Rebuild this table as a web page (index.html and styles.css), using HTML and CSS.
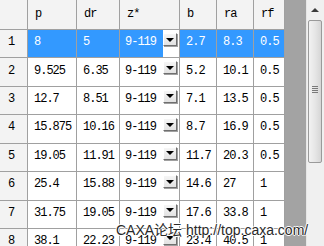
FILE: index.html
```html
<!DOCTYPE html>
<html>
<head>
<meta charset="utf-8">
<link rel="stylesheet" href="styles.css">
</head>
<body>
<div class="window">
  <div class="grid">
    <div class="hcell corner"></div>
    <div class="hcell">p</div>
    <div class="hcell">dr</div>
    <div class="hcell">z*</div>
    <div class="hcell">b</div>
    <div class="hcell">ra</div>
    <div class="hcell">rf</div>

    <div class="rcell">1</div>
    <div class="cell sel">8</div>
    <div class="cell sel">5</div>
    <div class="cell combo"><span class="val sel">9-119</span><span class="drop"><span class="btn"></span></span></div>
    <div class="cell sel">2.7</div>
    <div class="cell sel">8.3</div>
    <div class="cell sel">0.5</div>

    <div class="rcell">2</div>
    <div class="cell">9.525</div>
    <div class="cell">6.35</div>
    <div class="cell combo"><span class="val">9-119</span><span class="drop"><span class="btn"></span></span></div>
    <div class="cell">5.2</div>
    <div class="cell">10.1</div>
    <div class="cell">0.5</div>

    <div class="rcell">3</div>
    <div class="cell">12.7</div>
    <div class="cell">8.51</div>
    <div class="cell combo"><span class="val">9-119</span><span class="drop"><span class="btn"></span></span></div>
    <div class="cell">7.1</div>
    <div class="cell">13.5</div>
    <div class="cell">0.5</div>

    <div class="rcell">4</div>
    <div class="cell">15.875</div>
    <div class="cell">10.16</div>
    <div class="cell combo"><span class="val">9-119</span><span class="drop"><span class="btn"></span></span></div>
    <div class="cell">8.7</div>
    <div class="cell">16.9</div>
    <div class="cell">0.5</div>

    <div class="rcell">5</div>
    <div class="cell">19.05</div>
    <div class="cell">11.91</div>
    <div class="cell combo"><span class="val">9-119</span><span class="drop"><span class="btn"></span></span></div>
    <div class="cell">11.7</div>
    <div class="cell">20.3</div>
    <div class="cell">0.5</div>

    <div class="rcell">6</div>
    <div class="cell">25.4</div>
    <div class="cell">15.88</div>
    <div class="cell combo"><span class="val">9-119</span><span class="drop"><span class="btn"></span></span></div>
    <div class="cell">14.6</div>
    <div class="cell">27</div>
    <div class="cell">1</div>

    <div class="rcell">7</div>
    <div class="cell">31.75</div>
    <div class="cell">19.05</div>
    <div class="cell combo"><span class="val">9-119</span><span class="drop"><span class="btn"></span></span></div>
    <div class="cell">17.6</div>
    <div class="cell">33.8</div>
    <div class="cell">1</div>

    <div class="rcell">8</div>
    <div class="cell">38.1</div>
    <div class="cell">22.23</div>
    <div class="cell combo"><span class="val">9-119</span><span class="drop"><span class="btn"></span></span></div>
    <div class="cell">23.4</div>
    <div class="cell">40.5</div>
    <div class="cell">1</div>
  </div>
  <div class="workspace"></div>
  <div class="vscroll">
    <div class="sb-up"><span class="tri-up"></span></div>
    <div class="sb-thumb"><span class="grip"></span></div>
  </div>
  <div class="watermark">CAXA论坛 http://top.caxa.com/</div>
</div>
</body>
</html>
```
FILE: styles.css
```css
* { box-sizing: border-box; }
html, body { margin: 0; padding: 0; }
body { width: 324px; height: 246px; overflow: hidden; background: #ffffff; }

.window {
  position: relative;
  display: flex;
  width: 324px;
  height: 246px;
  overflow: hidden;
  font-family: "Liberation Mono", "DejaVu Sans Mono", monospace;
  font-size: 12px;
  letter-spacing: -1px;
  color: #000;
}

.grid {
  display: grid;
  grid-template-columns: 28px 49px 43px 60px 37px 37px 31px;
  grid-template-rows: 30px repeat(8, 28.43px);
  flex: 0 0 285px;
  align-content: start;
}

.hcell, .rcell, .cell {
  border-right: 1px solid #a0a0a0;
  border-bottom: 1px solid #a0a0a0;
  display: flex;
  align-items: center;
  padding-left: 7px;
  padding-bottom: 3px;
  white-space: nowrap;
}
.hcell { background: #f3f3f3; padding-bottom: 1px; }
.rcell { background: #f3f3f3; padding-left: 8px; }
.cell { background: #fff; padding-left: 6px; }
.sel { background: #3399ff; color: #fff; }

.cell.combo { padding: 0; align-items: stretch; }
.combo .val {
  flex: 1;
  display: flex;
  align-items: center;
  padding-left: 5px;
  padding-bottom: 3px;
}
.combo .drop {
  flex: 0 0 16px;
  background: #fff;
  padding-top: 3px;
}
.combo .btn {
  display: flex;
  align-items: center;
  justify-content: center;
  width: 14px;
  height: 13px;
  background: linear-gradient(#f6f6f6, #e2e2e2);
  border: 1px solid;
  border-color: #ffffff #6f6f6f #6f6f6f #ffffff;
  box-shadow: 1px 1px 0 #a0a0a0;
}
.combo .btn::after {
  content: "";
  width: 0;
  height: 0;
  border-left: 4px solid transparent;
  border-right: 4px solid transparent;
  border-top: 4px solid #000;
}

.workspace {
  flex: 0 0 21px;
  background: #a3a3a3;
}

.vscroll {
  flex: 0 0 18px;
  background: #f0f0f0;
  border-left: 1px solid #e6e6e6;
  padding-right: 2px;
  display: flex;
  flex-direction: column;
}
.sb-up {
  height: 20px;
  display: flex;
  align-items: center;
  justify-content: center;
}
.tri-up {
  width: 0;
  height: 0;
  border-left: 4px solid transparent;
  border-right: 4px solid transparent;
  border-bottom: 4px solid #3c3c3c;
}
.sb-thumb {
  margin-left: 1px;
  width: 14px;
  height: 143px;
  border: 1px solid #9a9a9a;
  border-radius: 2px;
  background: linear-gradient(90deg, #f2f2f2, #e6e6e6 50%, #d6d6d6);
  display: flex;
  align-items: center;
  justify-content: center;
}
.grip {
  width: 6px;
  height: 7px;
  background: repeating-linear-gradient(#7a7a7a 0 1px, transparent 1px 2px);
  margin-top: -4px;
}

.watermark {
  position: absolute;
  left: 116px;
  top: 222px;
  font-family: "Liberation Sans", "Noto Sans CJK SC", sans-serif;
  font-size: 14px;
  letter-spacing: 0;
  line-height: 16px;
  color: #2a2a2a;
  white-space: nowrap;
  text-shadow: 1px 0 0 #fff, -1px 0 0 #fff, 0 1px 0 #fff, 0 -1px 0 #fff;
}
```
